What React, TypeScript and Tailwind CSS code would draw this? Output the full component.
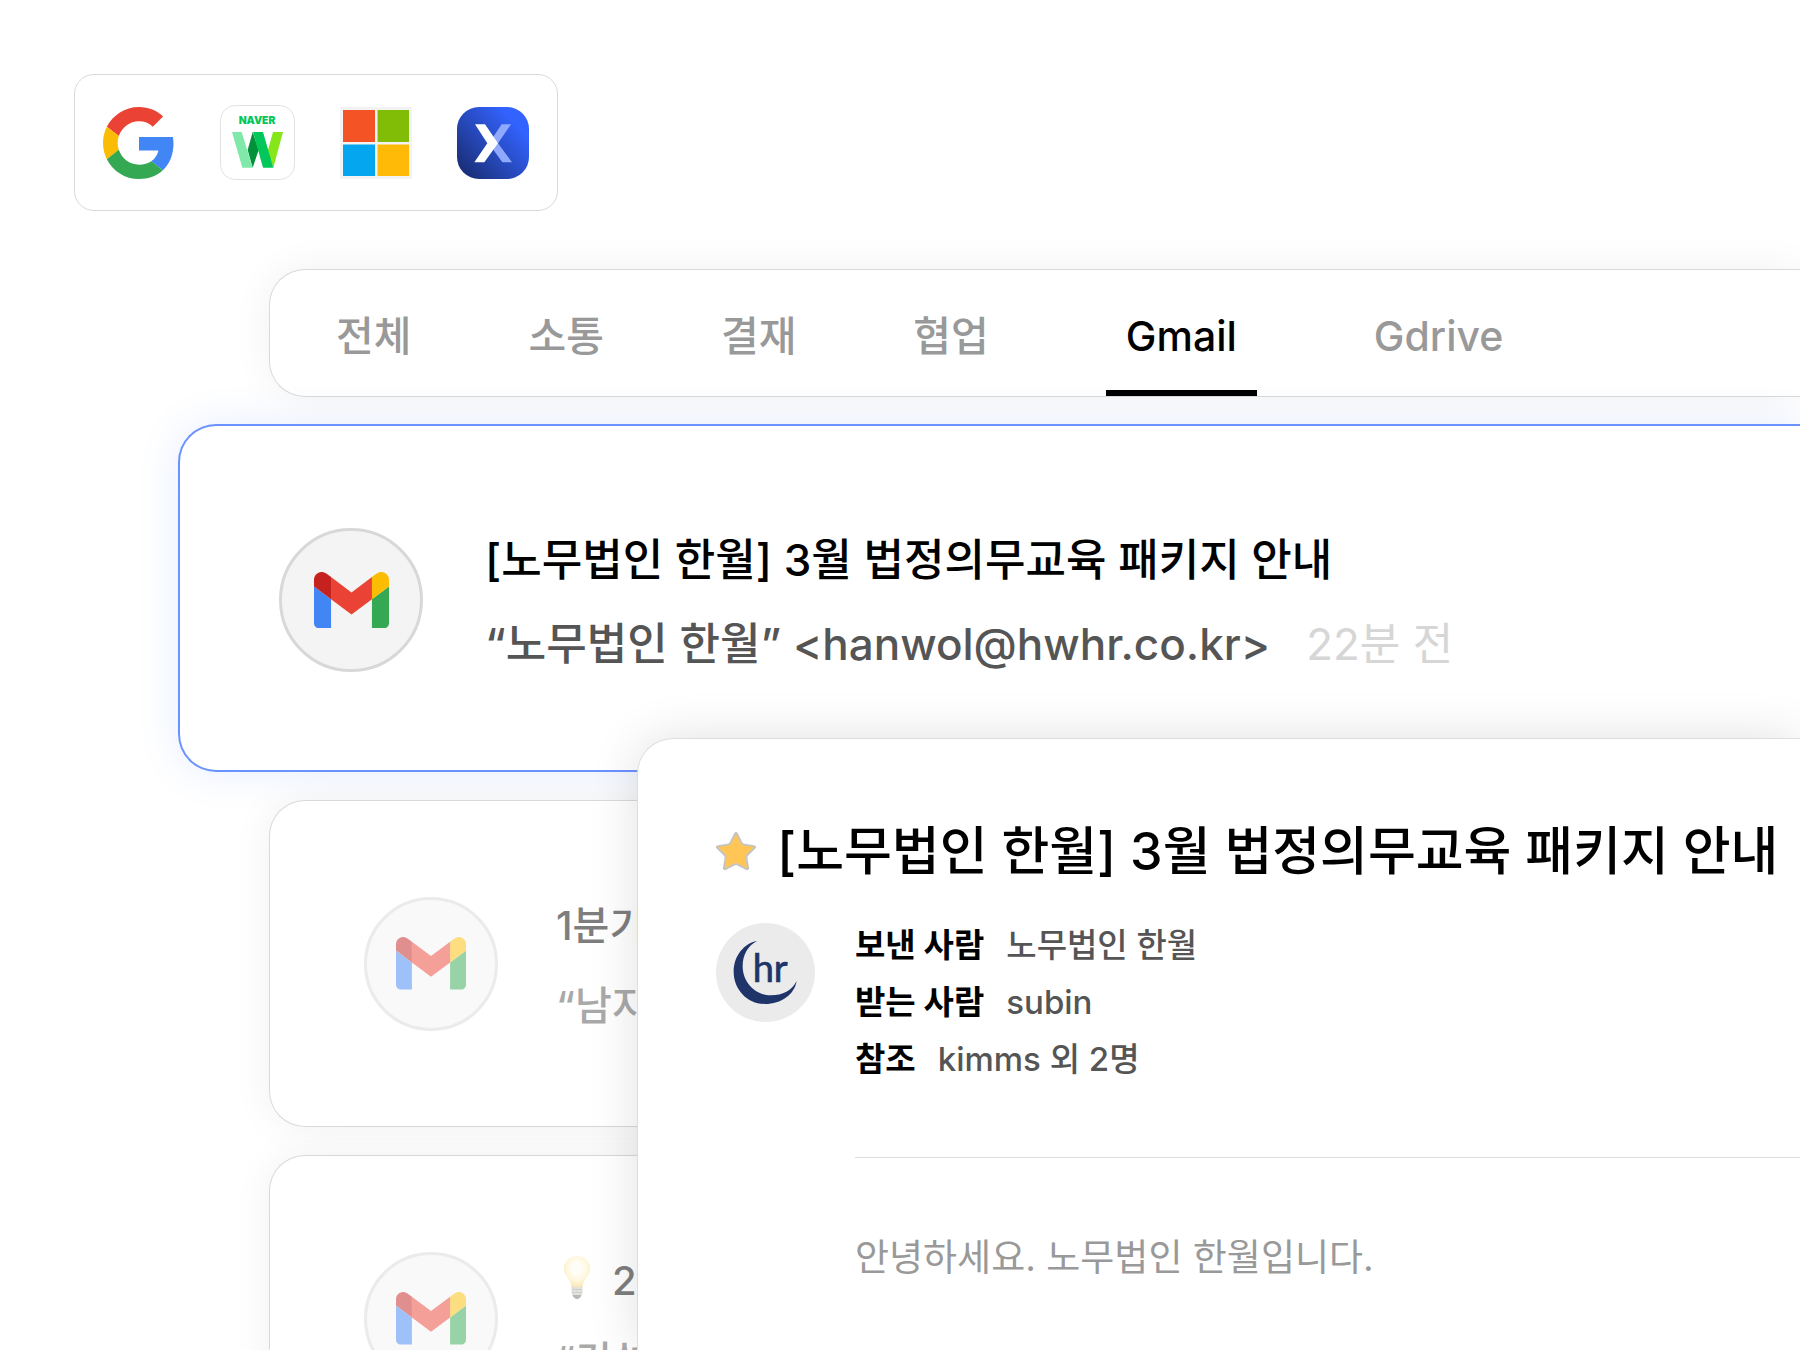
import { Star } from "lucide-react";
import type { ReactNode } from "react";

const tabs = ["전체", "소통", "결재", "협업", "Gmail", "Gdrive"];

function GoogleLogo() {
  return (
    <svg viewBox="0 0 48 48" className="size-[72px]" aria-label="Google">
      <path fill="#EA4335" d="M24 9.5c3.54 0 6.71 1.22 9.21 3.6l6.85-6.85C35.9 2.38 30.47 0 24 0 14.62 0 6.51 5.38 2.56 13.22l7.98 6.19C12.43 13.72 17.74 9.5 24 9.5z" />
      <path fill="#4285F4" d="M46.98 24.55c0-1.57-.15-3.09-.38-4.55H24v9.02h12.94c-.58 2.96-2.26 5.48-4.78 7.18l7.73 6c4.51-4.18 7.09-10.36 7.09-17.65z" />
      <path fill="#FBBC05" d="M10.53 28.59c-.48-1.45-.76-2.99-.76-4.59s.27-3.14.76-4.59l-7.98-6.19C.92 16.46 0 20.12 0 24c0 3.88.92 7.54 2.56 10.78l7.97-6.19z" />
      <path fill="#34A853" d="M24 48c6.48 0 11.93-2.13 15.89-5.81l-7.73-6c-2.15 1.45-4.92 2.3-8.16 2.3-6.26 0-11.57-4.22-13.47-9.91l-7.98 6.19C6.51 42.62 14.62 48 24 48z" />
    </svg>
  );
}

function NaverWorksLogo() {
  return (
    <svg viewBox="0 0 225 225" className="size-[75px]" aria-label="NAVER WORKS">
      <rect x="1.5" y="1.5" width="222" height="222" rx="44" fill="#fff" stroke="#e2e2e2" strokeWidth="3" />
      <text x="111" y="57" textAnchor="middle" fontFamily="Inter, sans-serif" fontWeight="900" fontSize="31" fill="#03c75a">
        NAVER
      </text>
      <path fill="#009139" d="M98 81 83 135l15 53 18-53z" />
      <path fill="#80e8a8" d="M36 81h29l33 107H67z" />
      <path fill="#87e61a" d="M159 81h30l-29 107-17-50z" />
      <path fill="#03c75a" d="M99 81h30l31 107h-31z" />
    </svg>
  );
}

function MicrosoftLogo() {
  return (
    <svg viewBox="0 0 72 72" className="size-[72px]" aria-label="Microsoft">
      <path fill="#f3f3f3" d="M0 0h72v72H0z" />
      <path fill="#f35325" d="M3 3h32v32H3z" />
      <path fill="#81bc06" d="M37.500 3h31.500v32H37.500z" />
      <path fill="#05a6f0" d="M3 37.500h32V69H3z" />
      <path fill="#ffba08" d="M37.500 37.500h31.500V69H37.500z" />
    </svg>
  );
}

function XLogo() {
  return (
    <svg viewBox="0 0 216 216" className="size-[72px]" aria-label="X">
      <defs>
        <linearGradient id="x-bg" x1="0" y1="1" x2="0.85" y2="0.25">
          <stop offset="0" stopColor="#172867" />
          <stop offset="1" stopColor="#3363ff" />
        </linearGradient>
      </defs>
      <rect width="216" height="216" rx="66" fill="url(#x-bg)" />
      <path fill="#8fa9ff" d="M134 52h28l-39 57 42 57h-29l-27-38V89z" />
      <path fill="#fff" d="M54 52h30l39 57-41 57H52l39-57z" />
    </svg>
  );
}

function GmailLogo({ className }: { className: string }) {
  return (
    <svg viewBox="52 42 88 66" className={className} aria-hidden="true">
      <path fill="#4285f4" d="M58 108h14V74L52 59v43c0 3.320 2.690 6 6 6" />
      <path fill="#34a853" d="M120 108h14c3.320 0 6-2.690 6-6V59l-20 15" />
      <path fill="#fbbc04" d="M120 48v26l20-15v-8c0-7.420-8.470-11.650-14.400-7.200" />
      <path fill="#ea4335" d="M72 74V48l24 18 24-18v26L96 92" />
      <path fill="#c5221f" d="M52 51v8l20 15V48l-5.600-4.200c-5.940-4.450-14.400-.220-14.400 7.200" />
    </svg>
  );
}

function BulbIcon() {
  return (
    <svg viewBox="0 0 26 43" className="mx-2 mb-1.5 h-[43px] w-[26px]" aria-hidden="true">
      <defs>
        <radialGradient id="bulb" cx="0.5" cy="0.4" r="0.6">
          <stop offset="0.3" stopColor="#fffdf0" />
          <stop offset="0.7" stopColor="#fff0b8" />
          <stop offset="1" stopColor="#f3cf6a" />
        </radialGradient>
      </defs>
      <path d="M8.500 35h9v3.500c0 2-2 4.500-4.500 4.500s-4.500-2.500-4.500-4.500z" fill="#757575" />
      <path d="M7.500 30h11v7l-2 2h-7l-2-2z" fill="#c4c4bc" />
      <path d="M8 33.500h10M8 36.500h10" stroke="#98988f" strokeWidth="0.8" />
      <path d="M13 0C5.600 0 0 5.600 0 13c0 7 7.500 10.500 7.500 18h11c0-7.500 7.500-11 7.500-18C26 5.600 20.400 0 13 0z" fill="url(#bulb)" />
    </svg>
  );
}

function HrLogo() {
  return (
    <svg viewBox="0 0 297 297" className="size-[99px] shrink-0" aria-label="hr">
      <circle cx="148.500" cy="148.500" r="148.500" fill="#ebebeb" />
      <path
        fill="#1f3468"
        d="M123 54C84 61 53 99 53 146c0 54 42 97 94 97 49 0 88-28 95-69-14 28-42 43-77 43-50 0-85-41-85-87 0-35 16-62 43-76z"
      />
      <text x="110" y="178" fontFamily="Lato, sans-serif" fontSize="114" fill="#1f3468" stroke="#1f3468" strokeWidth="2">
        hr
      </text>
    </svg>
  );
}

function MailRow({ title, sender }: { title: ReactNode; sender: string }) {
  return (
    <li className="ml-[91px] h-[327px] rounded-l-[36px] border border-r-0 border-[#d9d9d9] bg-white pl-[94px] shadow-[0_0_40px_rgba(0,0,0,0.06)]">
      <div className="flex h-full items-center gap-[58px] opacity-50">
        <div className="flex size-[134px] shrink-0 items-center justify-center rounded-full border-[3px] border-[#d8d8d8] bg-[#f4f4f4]">
          <GmailLogo className="w-[70px]" />
        </div>
        <div className="pt-1 whitespace-nowrap text-[40px] font-medium leading-[80px]">
          <p className="flex items-center">{title}</p>
          <p className="text-[#555]">{sender}</p>
        </div>
      </div>
    </li>
  );
}

function DetailField({ label, children }: { label: string; children: ReactNode }) {
  return (
    <div className="flex gap-[22px]">
      <dt className="font-bold">{label}</dt>
      <dd className="font-medium text-[#555]">{children}</dd>
    </div>
  );
}

export default function App() {
  return (
    <main className="relative h-screen overflow-hidden bg-white pt-[74px] font-['Inter','Noto_Sans_CJK_KR',sans-serif] text-black">
      <div className="ml-[74px] flex h-[137px] w-fit items-center gap-[45px] rounded-[20px] border border-[#d9d9d9] bg-white px-7">
        <GoogleLogo />
        <NaverWorksLogo />
        <MicrosoftLogo />
        <XLogo />
      </div>

      <div className="mt-[58px] pl-[178px]">
        <nav className="ml-[91px] flex h-[128px] gap-[117px] rounded-l-[36px] border border-r-0 border-[#d9d9d9] bg-white pl-[66px] text-[41px] font-medium shadow-[0_0_40px_rgba(0,0,0,0.06)]">
          {tabs.map((tab) => (
            <button
              key={tab}
              className={
                tab === "Gmail"
                  ? "border-y-[6px] border-t-transparent border-b-black px-5 pt-2"
                  : "border-y-[6px] border-transparent pt-2 text-[#999]"
              }
            >
              {tab}
            </button>
          ))}
        </nav>

        <ul className="mt-[27px] flex flex-col gap-7">
          <li className="flex h-[348px] items-center gap-[62px] rounded-l-[38px] border-2 border-r-0 border-[#6b93ff] bg-white pt-1 pl-[99px] shadow-[0_0_40px_rgba(76,128,255,0.14)]">
            <div className="flex size-[144px] shrink-0 items-center justify-center rounded-full border-[3px] border-[#d8d8d8] bg-[#f4f4f4]">
              <GmailLogo className="w-[75px]" />
            </div>
            <div className="pt-1 whitespace-nowrap text-[44px] font-medium leading-[84px]">
              <p>[노무법인 한월] 3월 법정의무교육 패키지 안내</p>
              <p className="text-[#555]">
                “노무법인 한월” &lt;hanwol@hwhr.co.kr&gt;
                <time className="ml-9 font-normal text-[#d6d6d6]">22분 전</time>
              </p>
            </div>
          </li>
          <MailRow title="1분기 실적 보고" sender="“남지현”" />
          <MailRow
            title={
              <>
                <BulbIcon />
                <span className="ml-[14px]">2분기 안내</span>
              </>
            }
            sender="“컨설팅”"
          />
        </ul>
      </div>

      {/* Opened mail, laid over the list */}
      <article className="absolute top-[738px] right-0 bottom-0 left-[637px] rounded-tl-[36px] border-t border-l border-[#dedede] bg-white pt-[73px] pl-[78px] shadow-[0_0_50px_rgba(0,0,0,0.12)]">
        <h2 className="flex items-center gap-[21px] whitespace-nowrap text-[52px] font-medium leading-[80px]">
          <Star
            size={40}
            viewBox="1.5 1.5 21 21"
            strokeWidth={1}
            className="shrink-0 fill-[#ffc655] text-[#c4c4c4]"
          />
          [노무법인 한월] 3월 법정의무교육 패키지 안내
        </h2>
        <div className="mt-[25px] flex gap-10">
          <div className="mt-[6px]">
            <HrLogo />
          </div>
          <div className="grow">
            <dl className="text-[33px] leading-[57px]">
              <DetailField label="보낸 사람">노무법인 한월</DetailField>
              <DetailField label="받는 사람">subin</DetailField>
              <DetailField label="참조">kimms 외 2명</DetailField>
            </dl>
            <hr className="mt-[69px] border-[#dedede]" />
            <p className="mt-[71px] text-[37px] leading-[58px] text-[#999]">안녕하세요. 노무법인 한월입니다.</p>
          </div>
        </div>
      </article>
    </main>
  );
}
